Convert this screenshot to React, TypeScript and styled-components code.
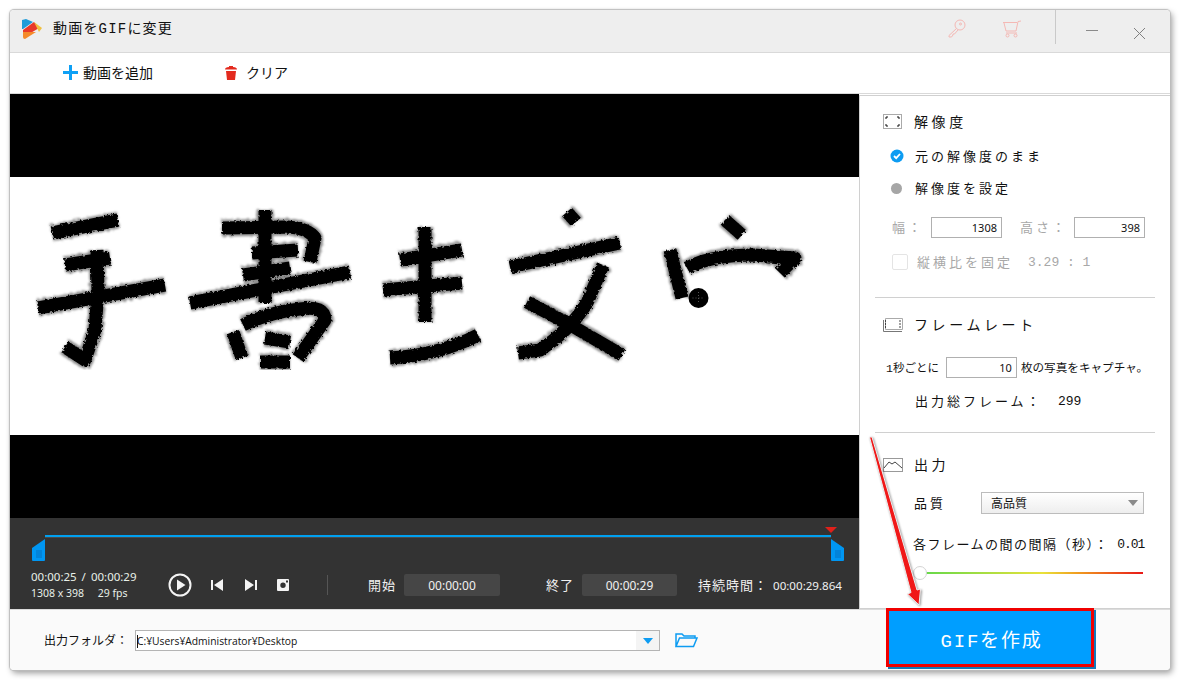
import React from "react";
import styled, { createGlobalStyle } from "styled-components";

const gothic = `"Liberation Mono", "Noto Sans CJK JP", monospace`;
const ui = `"Noto Sans", "Noto Sans CJK JP", sans-serif`;

const GlobalStyle = createGlobalStyle`
  html, body { margin: 0; padding: 0; background: #fff; }
  body { font-family: ${gothic}; color: #111; }
`;

// Shell

const Page = styled.div`
  position: relative;
  width: 1180px;
  height: 680px;
  padding: 10px;
  box-sizing: border-box;
  overflow: hidden;
`;

const Window = styled.div`
  width: 1160px;
  height: 660px;
  display: flex;
  flex-direction: column;
  background: #fff;
  border-radius: 4px;
  box-shadow: 0 0 1px 1px #bdbdbd, 2px 3px 6px rgba(0, 0, 0, 0.4);
  overflow: hidden;
`;

const TitleBar = styled.div`
  height: 42px;
  flex: none;
  display: flex;
  align-items: center;
  padding-left: 12px;
  background: #eeeeee;
  border-bottom: 1px solid #d9d9d9;
`;

const Logo = styled.svg`
  margin-bottom: 4px;
  flex: none;
`;

const Title = styled.span`
  margin: 0 0 8px 11px;
  font-size: 14px;
  letter-spacing: 1.2px;
`;

const TitleTools = styled.div`
  margin-left: auto;
  height: 100%;
  padding-right: 24px;
  display: flex;
  align-items: flex-start;
`;

const ToolIcon = styled.svg<{ $left: number }>`
  margin: 9px 0 0 ${(p) => p.$left}px;
  flex: none;
`;

const TitleSeparator = styled.div`
  width: 1px;
  height: 34px;
  margin-left: 33px;
  background: #c9c9c9;
`;

const ToolBar = styled.div`
  height: 39px;
  flex: none;
  display: flex;
  align-items: center;
  padding: 0 0 1px 53px;
  border-bottom: 1px solid #d9d9d9;
`;

const ToolButton = styled.div<{ $width: number }>`
  width: ${(p) => p.$width}px;
  display: flex;
  align-items: center;
  gap: 5px;
  font-size: 14px;
`;

const ToolText = styled.span`
  margin-bottom: 2px;
`;

const Body = styled.div`
  height: 515px;
  flex: none;
  display: flex;
`;

// Player

const Player = styled.div`
  width: 849px;
  flex: none;
  display: flex;
  flex-direction: column;
  background: #000;
`;

const Letterbox = styled.div`
  height: 83px;
  flex: none;
`;

const Frame = styled.div`
  height: 258px;
  flex: none;
  background: #fff;
`;

const Drawing = styled.svg`
  display: block;
`;

const Controls = styled.div`
  flex: 1;
  background: #333333;
  color: #f0f0f0;
`;

const Timeline = styled.div`
  position: relative;
  height: 47px;
`;

const TimelineTrack = styled.div`
  position: absolute;
  left: 35px;
  width: 786px;
  top: 17px;
  height: 2px;
  background: #00a0f0;
  box-shadow: 0 1px 0 #4a4a4a;
`;

const Handle = styled.svg<{ $left: number }>`
  position: absolute;
  left: ${(p) => p.$left}px;
  top: 21px;
`;

const EndMarker = styled.div`
  position: absolute;
  left: 815px;
  top: 9px;
  width: 0;
  height: 0;
  border-left: 6px solid transparent;
  border-right: 6px solid transparent;
  border-top: 6px solid #e0201a;
`;

const ControlRow = styled.div`
  display: flex;
  align-items: center;
  height: 40px;
  padding-left: 21px;
`;

const MediaInfo = styled.div`
  width: 137px;
  font-family: ${ui};
  line-height: 17px;
  color: #e8f0e8;
`;

const MediaLine = styled.div<{ $size: number; $spread: number }>`
  font-size: ${(p) => p.$size}px;
  word-spacing: ${(p) => p.$spread}px;
  white-space: pre;
`;

const PlayerIcon = styled.svg<{ $left: number }>`
  margin-left: ${(p) => p.$left}px;
  flex: none;
  display: block;
`;

const ControlDivider = styled.div`
  width: 1px;
  height: 20px;
  margin-left: 38px;
  background: #555;
`;

const ControlLabel = styled.span<{ $left: number; $width: number }>`
  margin: 0 0 2px ${(p) => p.$left}px;
  width: ${(p) => p.$width}px;
  flex: none;
  font-size: 13px;
  letter-spacing: 1px;
  white-space: nowrap;
`;

const TimeBox = styled.div<{ $width: number }>`
  width: ${(p) => p.$width}px;
  height: 22px;
  flex: none;
  display: flex;
  align-items: center;
  justify-content: center;
  background: #464646;
  border-radius: 2px;
  font-family: ${ui};
  font-size: 12px;
`;

const Duration = styled.span`
  margin-left: 8px;
  font-family: ${ui};
  font-size: 11.6px;
  white-space: nowrap;
`;

// Settings

const Settings = styled.div`
  width: 311px;
  flex: none;
  box-sizing: border-box;
  margin-top: 1px;
  border-top: 1px solid #d0d0d0;
  border-left: 1px solid #d0d0d0;
  border-bottom: 1px solid #d0d0d0;
  padding: 0 15px;
  background: #fff;
  height: 514px;
`;

const Section = styled.div<{ $height: number; $top: number; $last?: boolean }>`
  height: ${(p) => p.$height}px;
  box-sizing: border-box;
  padding-top: ${(p) => p.$top}px;
  border-bottom: ${(p) => (p.$last ? "none" : "1px solid #d0d0d0")};
`;

const SectionHead = styled.div`
  height: 20px;
  display: flex;
  align-items: center;
  padding-left: 8px;
  font-size: 14px;
  letter-spacing: 3.6px;
  white-space: nowrap;
`;

const HeadText = styled.span`
  margin-bottom: 2px;
`;

const HeadIcon = styled.svg`
  width: 20px;
  height: 16px;
  margin-right: 11px;
  flex: none;
`;

const Row = styled.div<{ $top: number; $left: number; $muted?: boolean; $height?: number }>`
  display: flex;
  align-items: center;
  height: ${(p) => p.$height ?? 20}px;
  margin-top: ${(p) => p.$top}px;
  padding-left: ${(p) => p.$left}px;
  font-size: 13px;
  white-space: nowrap;
  color: ${(p) => (p.$muted ? "#a8a8a8" : "#111")};
`;

const WideText = styled.span<{ $left?: number; $width?: number }>`
  margin: 0 0 2px ${(p) => p.$left ?? 0}px;
  width: ${(p) => (p.$width ? `${p.$width}px` : "auto")};
  flex: none;
  letter-spacing: 3px;
`;

const Value = styled.span<{ $left: number; $spacing?: number }>`
  margin-left: ${(p) => p.$left}px;
  flex: none;
  font-size: 13px;
  letter-spacing: ${(p) => p.$spacing ?? 0}px;
`;

const TightText = styled.span<{ $left?: number; $size: number; $spacing?: number }>`
  margin: 0 0 2px ${(p) => p.$left ?? 0}px;
  flex: none;
  font-size: ${(p) => p.$size}px;
  letter-spacing: ${(p) => p.$spacing ?? 0}px;
`;

const CheckedRadio = styled.svg`
  width: 14px;
  height: 14px;
  margin-right: 11px;
  flex: none;
`;

const Radio = styled.div`
  width: 11px;
  height: 11px;
  margin: 0 13px 0 1px;
  border-radius: 50%;
  background: #a6a6a6;
  flex: none;
`;

const NumberBox = styled.div<{ $left?: number }>`
  width: 71px;
  height: 21px;
  box-sizing: border-box;
  margin-left: ${(p) => p.$left ?? 0}px;
  padding-right: 4px;
  display: flex;
  align-items: center;
  justify-content: flex-end;
  flex: none;
  border: 1px solid #b0b0b0;
  background: #fff;
  color: #111;
  font-family: ${ui};
  font-size: 11px;
`;

const CheckBox = styled.div`
  width: 16px;
  height: 16px;
  box-sizing: border-box;
  border: 1px solid #e4e4e4;
  border-radius: 2px;
  flex: none;
`;

const Select = styled.div`
  width: 163px;
  height: 22px;
  box-sizing: border-box;
  margin-left: 37px;
  padding: 0 5px 0 9px;
  display: flex;
  align-items: center;
  justify-content: space-between;
  border: 1px solid #bcbcbc;
  background: linear-gradient(#ffffff, #eeeeee);
  font-size: 12px;
`;

const SelectArrow = styled.div<{ $color: string }>`
  width: 0;
  height: 0;
  flex: none;
  border-left: 5.5px solid transparent;
  border-right: 5.5px solid transparent;
  border-top: 6px solid ${(p) => p.$color};
`;

const SliderWrap = styled.div`
  position: relative;
  width: 229px;
  height: 14px;
  margin: 12px 0 0 39px;
`;

const SliderLine = styled.div`
  position: absolute;
  left: 5px;
  right: 0;
  top: 6px;
  height: 2px;
  background: linear-gradient(90deg, #5fd84a, #e8e23a 55%, #f0a020 70%, #e81818);
`;

const SliderKnob = styled.div`
  position: absolute;
  left: -1px;
  top: 0;
  width: 14px;
  height: 14px;
  box-sizing: border-box;
  border-radius: 50%;
  background: #fff;
  border: 1px solid #d4d4d4;
`;

// Bottom bar

const BottomBar = styled.div`
  flex: 1;
  display: flex;
  align-items: center;
  padding-left: 34px;
  background: #fafafa;
  border-top: 1px solid #dcdcdc;
`;

const FolderLabel = styled.span`
  width: 91px;
  flex: none;
  font-size: 12px;
  white-space: nowrap;
`;

const PathField = styled.div`
  width: 525px;
  height: 21px;
  box-sizing: border-box;
  margin-top: 1px;
  flex: none;
  display: flex;
  align-items: center;
  justify-content: space-between;
  border: 1px solid #b4b4b4;
  background: #fff;
  font-family: "Open Sans", ${ui};
  font-size: 10.3px;
`;

const PathText = styled.span`
  padding-left: 1px;
  &::before {
    content: "";
    display: inline-block;
    width: 1px;
    height: 13px;
    margin-right: -1px;
    vertical-align: -3px;
    background: #111;
  }
`;

const PathDrop = styled.div`
  width: 23px;
  height: 100%;
  display: flex;
  align-items: center;
  justify-content: center;
  flex: none;
  background: #f4f4f4;
`;

const FolderIcon = styled.svg`
  margin-left: 15px;
  flex: none;
`;

const CreateButton = styled.div`
  width: 208px;
  height: 59px;
  box-sizing: border-box;
  margin: -2px 0 0 188px;
  padding: 2px 0 0 3px;
  align-self: flex-start;
  display: flex;
  align-items: center;
  justify-content: center;
  flex: none;
  background: #009eff;
  border: 3px solid #f00000;
  box-shadow: 2px 2px 0 #1579b8;
  color: #fff;
  font-size: 19px;
  letter-spacing: 1.8px;
`;

const ArrowOverlay = styled.svg`
  position: absolute;
  left: 860px;
  top: 430px;
  filter: drop-shadow(1px 1px 1px rgba(0, 0, 0, 0.4));
`;

// Data for the handwriting in the video frame, in page coordinates

const strokes = [
  "M52 233L118 220",
  "M65 265L110 258",
  "M38 308L165 285",
  "M97 250L98 290L95 330L85 360L65 347",
  "M222 228L287 227Q308 228 315 238L310 262",
  "M265 210V303",
  "M252 253L298 250",
  "M243 275L290 268",
  "M190 303L350 272",
  "M243 325Q270 312 300 309Q325 305 325 320L298 358",
  "M233 332L242 358",
  "M265 338L290 342",
  "M260 362H290",
  "M425 227V322",
  "M400 260L462 250",
  "M383 290L462 283",
  "M390 358Q440 355 478 335",
  "M567 212L576 222",
  "M510 267L620 243",
  "M603 265L587 303Q570 330 540 350L518 353",
  "M527 302L567 323L622 355",
  "M725 220L742 235",
  "M670 250L682 298",
  "M687 268Q710 255 753 255L795 258L780 273",
];

const BrushHandle = ({ left, flip }: { left: number; flip?: boolean }) => (
  <Handle $left={left} width="14" height="23" viewBox="0 0 14 23">
    <path
      d={flip ? "M0 0L13 9V21Q13 22 12 22H1Q0 22 0 21Z" : "M13 0L0 9V21Q0 22 1 22H12Q13 22 13 21Z"}
      fill="#0096f2"
    />
    <path d="M5 11V19M7 11V19M9 11V19" stroke="#0570c0" strokeWidth="1" />
  </Handle>
);

const StrokeLayer = ({ color, width, filter }: { color: string; width: number; filter: string }) => (
  <g filter={filter} fill="none" stroke={color} strokeWidth={width} strokeLinejoin="round">
    {strokes.map((d) => (
      <path key={d} d={d} />
    ))}
  </g>
);

export default function App() {
  return (
    <Page>
      <GlobalStyle />
      <Window>
        <TitleBar>
          <Logo width="20" height="21" viewBox="0 0 20 21">
            <path d="M0 1L4 0L11 3L1 10H0Z" fill="#1e9bd8" />
            <path d="M1 11L12 3L17 9L7 15H1Z" fill="#e8392a" />
            <path d="M12 3L20 9L17 13Z" fill="#f0c040" />
            <path d="M1 13L14 13L3 20Q1 20 1 18Z" fill="#f58a2a" />
          </Logo>
          <Title>動画をGIFに変更</Title>
          <TitleTools>
            <ToolIcon $left={0} width="18" height="20" viewBox="0 0 18 20" fill="none" stroke="#f4b8b4">
              <circle cx="12" cy="6" r="5" />
              <circle cx="12.5" cy="5" r="1" />
              <path d="M8.5 9.5L1 16.5V18H3.5L5 16V15H6.5L10 11" />
            </ToolIcon>
            <ToolIcon $left={36} width="20" height="20" viewBox="0 0 20 20" fill="none" stroke="#f4b8b4">
              <path d="M1 3.5H15M2 4L4 12H14L16 2.5L19 2M4 14H15" />
              <circle cx="5.5" cy="16.5" r="1.5" />
              <circle cx="13.5" cy="16.5" r="1.5" />
            </ToolIcon>
            <TitleSeparator />
            <ToolIcon $left={29} width="14" height="20" viewBox="0 0 14 20" fill="none" stroke="#8a8a8a">
              <path d="M1 11.5H13" />
            </ToolIcon>
            <ToolIcon $left={34} width="13" height="20" viewBox="0 0 13 20" fill="none" stroke="#808080">
              <path d="M1 9L12 20M12 9L1 20" />
            </ToolIcon>
          </TitleTools>
        </TitleBar>

        <ToolBar>
          <ToolButton $width={161}>
            <svg width="15" height="15" viewBox="0 0 15 15">
              <path d="M6 0H9V6H15V9H9V15H6V9H0V6H6Z" fill="#0ea0f5" />
            </svg>
            <ToolText>動画を追加</ToolText>
          </ToolButton>
          <ToolButton $width={120}>
            <svg width="14" height="16" viewBox="0 0 14 16" style={{ marginRight: 3 }}>
              <path d="M1 4.5Q1 2 5 2V1H9V2Q13 2 13 4.5Z M2 6H12L11 15H3Z" fill="#e32a1e" />
            </svg>
            <ToolText>クリア</ToolText>
          </ToolButton>
        </ToolBar>

        <Body>
          <Player>
            <Letterbox />
            <Frame>
              <Drawing width="849" height="258" viewBox="10 177 849 258">
                <defs>
                  <filter id="fringe" x="-5%" y="-5%" width="110%" height="110%">
                    <feTurbulence type="fractalNoise" baseFrequency="0.3" numOctaves="2" seed="7" result="noise" />
                    <feDisplacementMap in="SourceGraphic" in2="noise" scale="4" />
                    <feGaussianBlur stdDeviation="1.3" />
                  </filter>
                  <filter id="brush" x="-5%" y="-5%" width="110%" height="110%">
                    <feTurbulence type="fractalNoise" baseFrequency="0.4" numOctaves="2" seed="4" result="noise" />
                    <feDisplacementMap in="SourceGraphic" in2="noise" scale="4" />
                    <feGaussianBlur stdDeviation="0.6" />
                  </filter>
                </defs>
                <StrokeLayer color="#8c8c8c" width={17} filter="url(#fringe)" />
                <StrokeLayer color="#000" width={13} filter="url(#brush)" />
                <circle cx="698.5" cy="298" r="10" fill="#000" />
                <path d="M698.5 292V304M692.5 298H704.5" stroke="#555" strokeDasharray="1 2" />
              </Drawing>
            </Frame>
            <Letterbox />
            <Controls>
              <Timeline>
                <TimelineTrack />
                <BrushHandle left={22} />
                <BrushHandle left={821} flip />
                <EndMarker />
              </Timeline>
              <ControlRow>
                <MediaInfo>
                  <MediaLine $size={11.5} $spread={2}>00:00:25 / 00:00:29</MediaLine>
                  <MediaLine $size={10.5} $spread={0}>1308 x 398     29 fps</MediaLine>
                </MediaInfo>
                <PlayerIcon $left={0} width="24" height="24" viewBox="0 0 24 24">
                  <circle cx="12" cy="12" r="10.5" fill="none" stroke="#f4f4f4" strokeWidth="2" />
                  <path d="M9 6.5L17.5 12L9 17.5Z" fill="#f4f4f4" />
                </PlayerIcon>
                <PlayerIcon $left={19} width="12" height="12" viewBox="0 0 12 12">
                  <path d="M0 1H2V11H0ZM12 0V12L3 6Z" fill="#f4f4f4" />
                </PlayerIcon>
                <PlayerIcon $left={22} width="12" height="12" viewBox="0 0 12 12">
                  <path d="M12 1H10V11H12ZM0 0V12L9 6Z" fill="#f4f4f4" />
                </PlayerIcon>
                <PlayerIcon $left={20} width="12" height="12" viewBox="0 0 12 12">
                  <path
                    fillRule="evenodd"
                    d="M1 0H11Q12 0 12 1V11Q12 12 11 12H1Q0 12 0 11V1Q0 0 1 0ZM6 3.5A2.7 2.7 0 1 0 6 8.9A2.7 2.7 0 1 0 6 3.5ZM9 1.5V3.5H11V1.5Z"
                    fill="#f4f4f4"
                  />
                </PlayerIcon>
                <ControlDivider />
                <ControlLabel $left={40} $width={36}>開始</ControlLabel>
                <TimeBox $width={96}>00:00:00</TimeBox>
                <ControlLabel $left={46} $width={36}>終了</ControlLabel>
                <TimeBox $width={95}>00:00:29</TimeBox>
                <ControlLabel $left={21} $width={67}>持続時間：</ControlLabel>
                <Duration>00:00:29.864</Duration>
              </ControlRow>
            </Controls>
          </Player>

          <Settings>
            <Section $height={202} $top={16}>
              <SectionHead>
                <HeadIcon viewBox="0 0 20 16" fill="none">
                  <rect x="0.5" y="0.5" width="18" height="14" stroke="#aaa" />
                  <path d="M3 5V3H5M14 3H16V5M16 10V12H14M5 12H3V10" stroke="#111" />
                </HeadIcon>
                <HeadText>解像度</HeadText>
              </SectionHead>
              <Row $top={14} $left={15}>
                <CheckedRadio viewBox="0 0 14 14">
                  <circle cx="7" cy="7" r="6.5" fill="#0d9cf2" />
                  <path d="M4 7L6.2 9.2L10 5" fill="none" stroke="#fff" strokeWidth="1.8" />
                </CheckedRadio>
                <WideText>元の解像度のまま</WideText>
              </Row>
              <Row $top={12} $left={15}>
                <Radio />
                <WideText>解像度を設定</WideText>
              </Row>
              <Row $top={19} $left={17} $muted $height={21}>
                <WideText $width={39}>幅：</WideText>
                <NumberBox>1308</NumberBox>
                <WideText $left={18} $width={54}>高さ：</WideText>
                <NumberBox>398</NumberBox>
              </Row>
              <Row $top={14} $left={17} $muted>
                <CheckBox />
                <WideText $left={9}>縦横比を固定</WideText>
                <Value $left={15}>3.29 : 1</Value>
              </Row>
            </Section>

            <Section $height={135} $top={17}>
              <SectionHead>
                <HeadIcon viewBox="0 0 20 16" fill="none">
                  <path d="M0.5 3V14.5H19" stroke="#777" />
                  <path d="M2.5 1.5H19.5V12.5H2.5Z" stroke="#aaa" />
                  <path d="M2.5 3V12M17 3V12" stroke="#444" strokeDasharray="2 1" />
                </HeadIcon>
                <HeadText>フレームレート</HeadText>
              </SectionHead>
              <Row $top={22} $left={11} $height={21}>
                <TightText $size={11.5}>1秒ごとに</TightText>
                <NumberBox $left={7}>10</NumberBox>
                <TightText $left={4} $size={11.6}>枚の写真をキャプチャ。</TightText>
              </Row>
              <Row $top={13} $left={40}>
                <WideText $width={143}>出力総フレーム：</WideText>
                <Value $left={0}>299</Value>
              </Row>
            </Section>

            <Section $height={175} $top={22} $last>
              <SectionHead>
                <HeadIcon viewBox="0 0 20 16" fill="none">
                  <rect x="0.5" y="1.5" width="19" height="13" stroke="#999" />
                  <path d="M1 11L6 5L9 7L12 5L19 11" stroke="#444" />
                </HeadIcon>
                <HeadText>出力</HeadText>
              </SectionHead>
              <Row $top={17} $left={39} $height={22}>
                <WideText $width={30}>品質</WideText>
                <Select>
                  高品質
                  <SelectArrow $color="#8a8a8a" />
                </Select>
              </Row>
              <Row $top={20} $left={38}>
                <TightText $size={13} $spacing={1.5}>各フレームの間の間隔（秒）：</TightText>
                <Value $left={8} $spacing={-1}>0.01</Value>
              </Row>
              <SliderWrap>
                <SliderLine />
                <SliderKnob />
              </SliderWrap>
            </Section>
          </Settings>
        </Body>

        <BottomBar>
          <FolderLabel>出力フォルダ：</FolderLabel>
          <PathField>
            <PathText>C:¥Users¥Administrator¥Desktop</PathText>
            <PathDrop>
              <SelectArrow $color="#0d9cf2" />
            </PathDrop>
          </PathField>
          <FolderIcon width="23" height="16" viewBox="0 0 23 16" fill="none" stroke="#0d9cf2" strokeWidth="1.5">
            <path d="M1 14.5V2H7L9 4H20V6M1 14.5L4.5 6H22L18.5 14.5Z" />
          </FolderIcon>
          <CreateButton>GIFを作成</CreateButton>
        </BottomBar>
      </Window>

      <ArrowOverlay width="70" height="180" viewBox="860 430 70 180">
        <path
          d="M869.5 437L872 437L917 590L920.5 589L919 605L907.5 594L911 592.5Z"
          fill="#f01818"
          stroke="#eeeeee"
          strokeWidth="1"
        />
      </ArrowOverlay>
    </Page>
  );
}
